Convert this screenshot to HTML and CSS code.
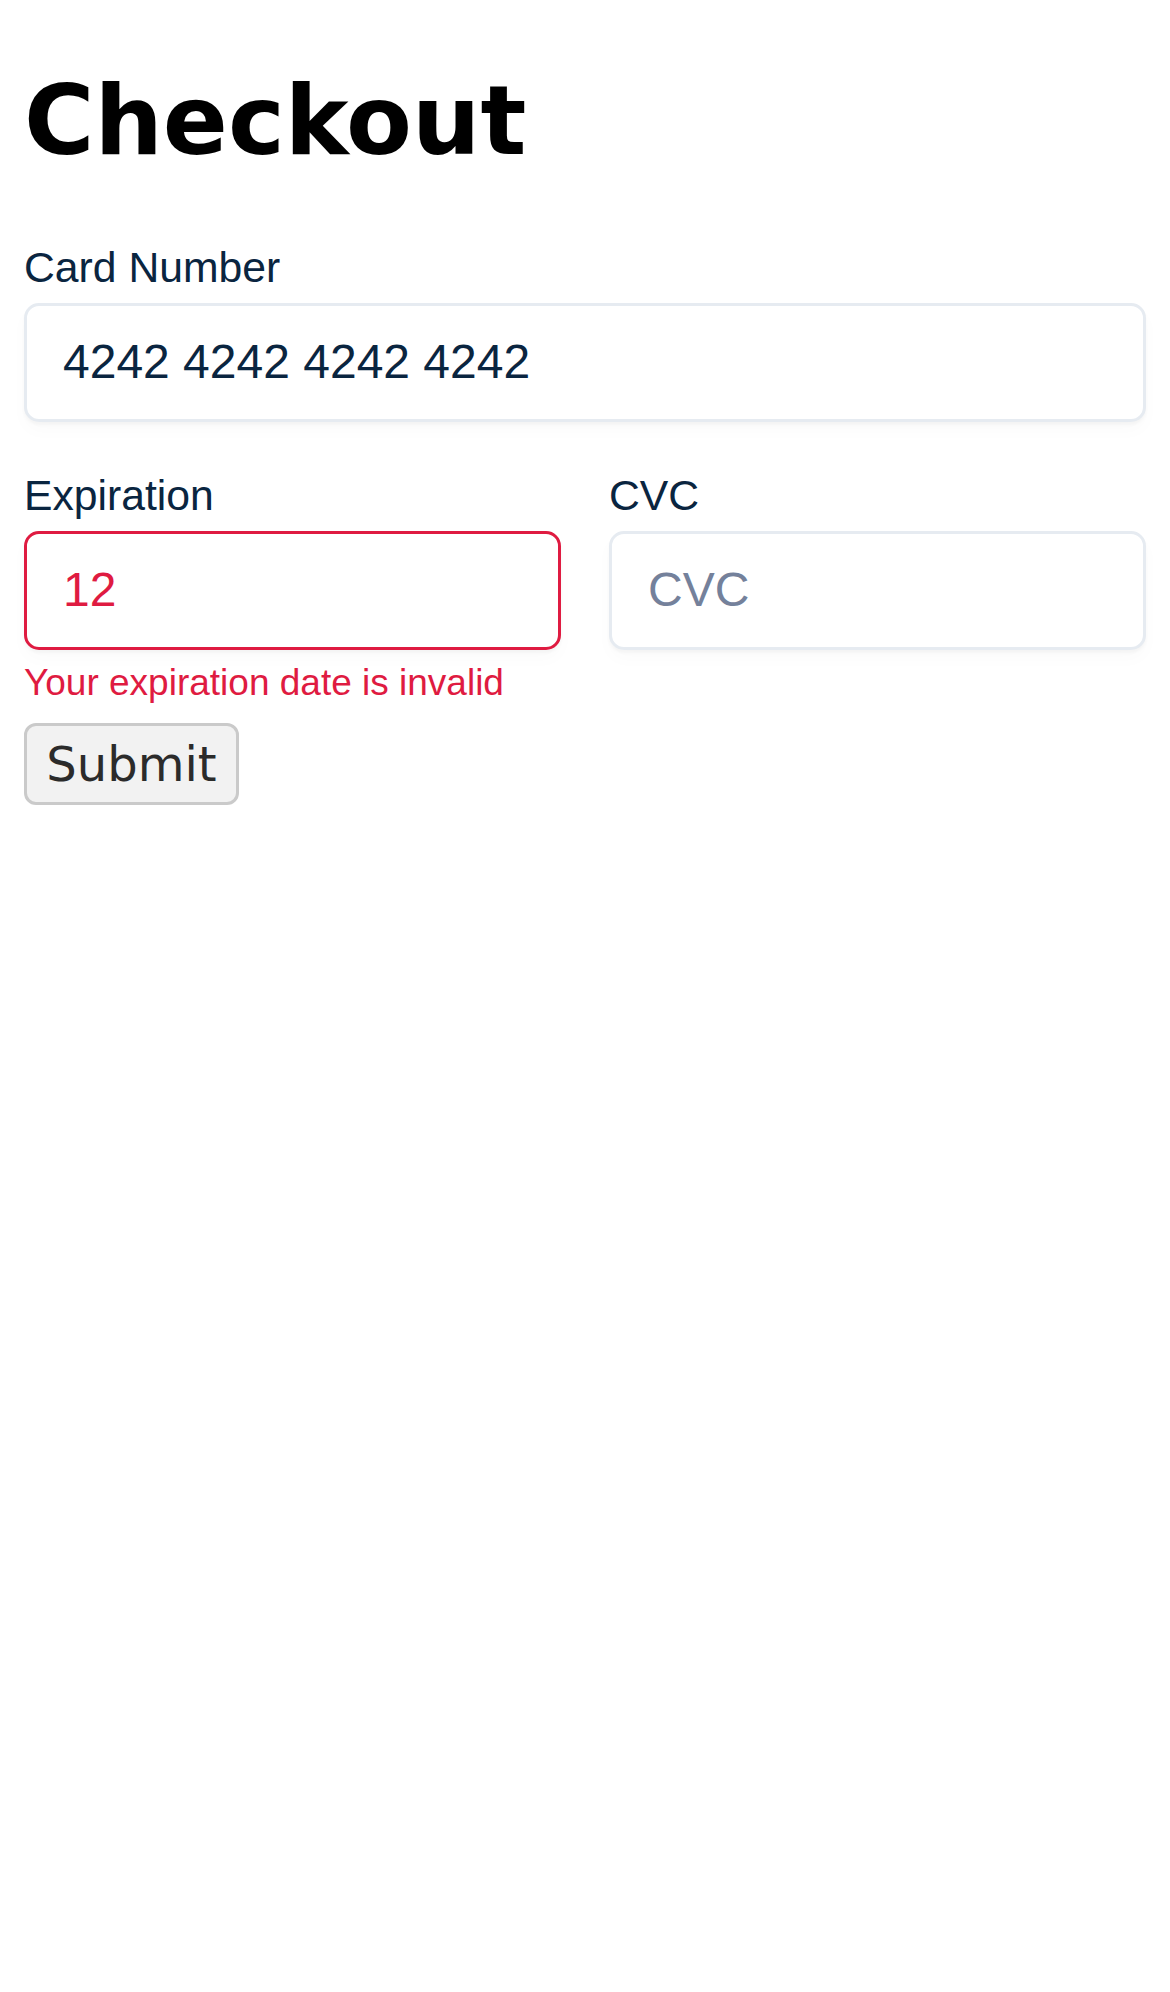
FILE: index.html
```html
<!DOCTYPE html>
<html lang="en">
<head>
<meta charset="utf-8">
<title>Checkout</title>
<link rel="stylesheet" href="styles.css">
</head>
<body>
<main class="page">
  <h1 class="title">Checkout</h1>
  <form class="checkout">
    <div class="field field-card">
      <label class="label" for="card">Card Number</label>
      <input class="input" id="card" type="text" value="4242 4242 4242 4242">
    </div>
    <div class="row">
      <div class="field">
        <label class="label" for="exp">Expiration</label>
        <input class="input input-error" id="exp" type="text" value="12">
        <div class="error">Your expiration date is invalid</div>
      </div>
      <div class="field">
        <label class="label" for="cvc">CVC</label>
        <input class="input" id="cvc" type="text" placeholder="CVC">
      </div>
    </div>
    <button class="submit" type="button">Submit</button>
  </form>
</main>
</body>
</html>
```
FILE: styles.css
```css
html, body {
  margin: 0;
  padding: 0;
  background: #ffffff;
}

.page {
  padding: 0 24px;
}

.title {
  font-family: "DejaVu Sans", sans-serif;
  font-weight: bold;
  font-size: 96px;
  line-height: 112px;
  margin: 65px 0 64px;
  color: #000000;
}

.checkout {
  display: flex;
  flex-direction: column;
  align-items: flex-start;
}

.field {
  display: flex;
  flex-direction: column;
  width: 100%;
}

.field-card {
  margin-top: 2px;
  margin-bottom: 49px;
}

.label {
  font-family: "Liberation Sans", Arial, sans-serif;
  font-size: 42.7px;
  line-height: 48px;
  color: #0a2540;
  margin-bottom: 12px;
}

.input {
  box-sizing: border-box;
  width: 100%;
  height: 119px;
  margin: 0;
  padding: 0 36px 2px;
  font-family: "Liberation Sans", Arial, sans-serif;
  font-size: 48px;
  color: #0a2540;
  background: #ffffff;
  border: 3px solid #e6ebf1;
  border-radius: 15px;
  box-shadow: 0 3px 3px rgba(0, 0, 0, 0.03), 0 9px 18px rgba(0, 0, 0, 0.02);
  outline: none;
}

.input::placeholder {
  color: #74819b;
  opacity: 1;
}

.input-error {
  border-color: #df1b41;
  color: #df1b41;
}

.row {
  display: grid;
  grid-template-columns: 1fr 1fr;
  column-gap: 48px;
  width: 100%;
}

.error {
  font-family: "Liberation Sans", Arial, sans-serif;
  font-size: 37px;
  line-height: 42px;
  color: #df1b41;
  margin-top: 12px;
}

.submit {
  box-sizing: border-box;
  width: 215px;
  height: 82px;
  margin-top: 19px;
  padding: 0 18px;
  font-family: "DejaVu Sans", sans-serif;
  font-size: 48px;
  color: #2b2b2b;
  background: #f2f2f2;
  border: 3px solid #cacaca;
  border-radius: 12px;
}
```
